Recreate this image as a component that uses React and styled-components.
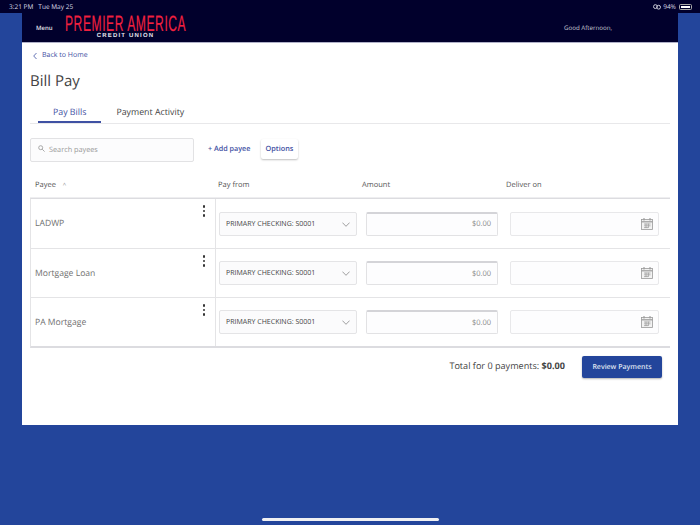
import React from "react";
import styled, { createGlobalStyle } from "styled-components";

const GlobalStyle = createGlobalStyle`
    html, body {
        margin: 0;
        padding: 0;
    }
    body {
        font-family: "Open Sans", "Liberation Sans", sans-serif;
        background: #23459b;
        text-rendering: geometricPrecision;
    }
    * {
        box-sizing: border-box;
    }
`;

const payees = ["LADWP", "Mortgage Loan", "PA Mortgage"];

function CalendarIcon() {
    return (
        <svg width="12" height="12" viewBox="0 0 12 12" fill="none" stroke="#9a9a9a" strokeWidth="0.8">
            <rect x="0.5" y="1.5" width="11" height="10" fill="#f2f2f2" />
            <path d="M0.5 3.8H11.5" strokeWidth="1.2" />
            <path d="M3 0V2.4M9 0V2.4" strokeWidth="1.1" />
            <path d="M3 6H9.5M3 7.8H9.5M3 9.6H7M5 5.6V10M7.4 5.6V10" strokeWidth="0.7" />
        </svg>
    );
}

function Chevron() {
    return (
        <svg width="8" height="5" viewBox="0 0 8 5" fill="none" stroke="#888" strokeWidth="0.8">
            <path d="M0.4 0.6L4 4.3L7.6 0.6" />
        </svg>
    );
}

function PayeeRow({ name }) {
    return (
        <Row>
            <PayeeCell>
                <PayeeName>{name}</PayeeName>
                <Kebab>
                    <i />
                    <i />
                    <i />
                </Kebab>
            </PayeeCell>
            <FieldCell>
                <Select>
                    <span>PRIMARY CHECKING: S0001</span>
                    <Chevron />
                </Select>
                <AmountInput>$0.00</AmountInput>
                <DateInput>
                    <CalendarIcon />
                </DateInput>
            </FieldCell>
        </Row>
    );
}

export default function App() {
    return (
        <Page>
            <GlobalStyle />
            <StatusBar>
                <span>3:21 PM&nbsp;&nbsp; Tue May 25</span>
                <StatusRight>
                    <svg width="8" height="6" viewBox="0 0 8 6" fill="none" stroke="#c9c9d6" strokeWidth="1">
                        <circle cx="2.4" cy="2.6" r="1.9" />
                        <circle cx="5.6" cy="3.2" r="1.9" />
                    </svg>
                    <span>94%</span>
                    <Battery>
                        <div />
                    </Battery>
                </StatusRight>
            </StatusBar>
            <Frame>
                <Header>
                    <MenuLabel>Menu</MenuLabel>
                    <Logo>
                        <LogoTop>PREMIER AMERICA</LogoTop>
                        <LogoBottom>CREDIT UNION</LogoBottom>
                    </Logo>
                    <Greeting>Good Afternoon,</Greeting>
                </Header>
                <Content>
                    <BackLink>
                        <svg width="4" height="8" viewBox="0 0 4 8" fill="none" stroke="#3f51a3" strokeWidth="0.8">
                            <path d="M3.5 1L0.7 4L3.5 7" />
                        </svg>
                        Back to Home
                    </BackLink>
                    <Title>Bill Pay</Title>
                    <Tabs>
                        <Tab $active>Pay Bills</Tab>
                        <Tab>Payment Activity</Tab>
                    </Tabs>
                    <Toolbar>
                        <Search>
                            <svg width="7" height="7" viewBox="0 0 7 7" fill="none" stroke="#a0a0a0" strokeWidth="0.9">
                                <circle cx="2.7" cy="2.7" r="2" />
                                <path d="M4.2 4.2L6.6 6.6" />
                            </svg>
                            <span>Search payees</span>
                        </Search>
                        <AddPayee>+ Add payee</AddPayee>
                        <OptionsButton>Options</OptionsButton>
                    </Toolbar>
                    <TableHead>
                        <HeadPayee>
                            Payee <SortMark>^</SortMark>
                        </HeadPayee>
                        <HeadLabel $width="144px">Pay from</HeadLabel>
                        <HeadLabel $width="144px">Amount</HeadLabel>
                        <HeadLabel>Deliver on</HeadLabel>
                    </TableHead>
                    <Table>
                        {payees.map((name) => (
                            <PayeeRow key={name} name={name} />
                        ))}
                    </Table>
                    <Footer>
                        <Total>
                            Total for 0 payments: <b>$0.00</b>
                        </Total>
                        <ReviewButton>Review Payments</ReviewButton>
                    </Footer>
                </Content>
            </Frame>
            <Bottom>
                <HomeBar />
            </Bottom>
        </Page>
    );
}

const Page = styled.div`
    width: 700px;
    height: 525px;
    display: flex;
    flex-direction: column;
    overflow: hidden;
    background: #23459b;
`;

const StatusBar = styled.div`
    height: 13px;
    flex: none;
    display: flex;
    justify-content: space-between;
    align-items: center;
    padding: 0 8px 0 9px;
    background: #01002c;
    color: #dcdce6;
    font-size: 6.5px;
    line-height: 13px;
`;

const StatusRight = styled.div`
    display: flex;
    align-items: center;
    gap: 2px;
`;

const Battery = styled.div`
    width: 13px;
    height: 6px;
    padding: 1px;
    margin-left: 1px;
    border: 0.5px solid #aaa;
    border-radius: 1.5px;

    div {
        height: 100%;
        background: #fff;
    }
`;

const Frame = styled.div`
    margin: 0 22px;
    flex: none;
    display: flex;
    flex-direction: column;
`;

const Header = styled.div`
    height: 30px;
    display: flex;
    align-items: center;
    background: #01002c;
    border-bottom: 1px solid #b0b1c8;
`;

const MenuLabel = styled.div`
    width: 43px;
    padding-left: 14px;
    color: #e4e4ea;
    font-size: 6px;
    font-weight: 600;
`;

const Logo = styled.div`
    width: 121px;
    display: flex;
    flex-direction: column;
    align-items: center;
`;

const LogoTop = styled.div`
    width: 121px;
    height: 16px;
    color: #f0203f;
    font-family: "Liberation Sans", sans-serif;
    font-size: 22px;
    line-height: 16px;
    letter-spacing: 1px;
    -webkit-text-stroke: 0.15px #f0203f;
    white-space: nowrap;
    transform: scaleX(0.55);
    transform-origin: left center;
`;

const LogoBottom = styled.div`
    margin-top: 1px;
    color: #e6e6ee;
    font-family: "Liberation Sans", sans-serif;
    font-size: 6px;
    font-weight: 700;
    line-height: 6px;
    letter-spacing: 1.2px;
`;

const Greeting = styled.div`
    margin-left: auto;
    width: 114px;
    color: #c8c8d4;
    font-size: 6.2px;
`;

const Content = styled.div`
    height: 382px;
    padding: 0 8px;
    display: flex;
    flex-direction: column;
    background: #fff;
`;

const BackLink = styled.div`
    height: 25px;
    padding-left: 3px;
    display: flex;
    align-items: center;
    gap: 5px;
    color: #3f51a3;
    font-size: 7px;
`;

const Title = styled.div`
    height: 27px;
    color: #444;
    font-size: 15px;
    line-height: 27px;
`;

const Tabs = styled.div`
    height: 29px;
    padding-left: 8px;
    display: flex;
    border-bottom: 1px solid #e8e8ea;
`;

const Tab = styled.div`
    height: 28px;
    padding: 0 15px;
    line-height: 34px;
    font-size: 8.8px;
    color: ${(props) => (props.$active ? "#3f51a3" : "#444")};
    border-bottom: ${(props) => (props.$active ? "2px solid #3f51a3" : "none")};
`;

const Toolbar = styled.div`
    height: 24px;
    margin-top: 14px;
    display: flex;
    align-items: center;
`;

const Search = styled.div`
    width: 164px;
    height: 24px;
    padding: 0 6px 0 7px;
    display: flex;
    gap: 4px;
    align-items: center;
    background: #fcfcfd;
    border: 1px solid #e2e2e4;
    border-radius: 2px;
    color: #999;
    font-size: 7.3px;

    svg {
        margin-top: -4px;
    }
`;

const AddPayee = styled.div`
    margin: -2px 0 0 14px;
    width: 53px;
    color: #3f51a3;
    font-size: 7.2px;
    font-weight: 600;
    white-space: nowrap;
`;

const OptionsButton = styled.div`
    width: 37px;
    height: 20px;
    margin-top: -3px;
    display: flex;
    align-items: center;
    justify-content: center;
    color: #3f51a3;
    font-size: 7.3px;
    font-weight: 600;
    background: #fff;
    border-radius: 2px;
    box-shadow: 0 1px 2px rgba(0, 0, 0, 0.25);
`;

const TableHead = styled.div`
    height: 36px;
    padding-top: 10px;
    display: flex;
    align-items: center;
    color: #555;
    font-size: 7.5px;
`;

const HeadPayee = styled.div`
    width: 188px;
    padding-left: 5px;
`;

const SortMark = styled.span`
    margin-left: 5px;
    color: #888;
    font-size: 6px;
`;

const HeadLabel = styled.div`
    width: ${(props) => props.$width || "auto"};
`;

const Table = styled.div`
    display: flex;
    flex-direction: column;
    border-top: 1px solid #dcdce0;
    border-bottom: 2px solid #dcdce0;
    border-left: 1px solid #e4e4e6;
    box-shadow: 0 -1px 0 #eeeef0;
`;

const Row = styled.div`
    height: 49px;
    display: flex;
    & + & {
        border-top: 1px solid #e4e4e6;
    }
`;

const PayeeCell = styled.div`
    flex: none;
    width: 185px;
    padding-left: 4px;
    position: relative;
    display: flex;
    align-items: center;
    border-right: 1px solid #e4e4e6;
`;

const PayeeName = styled.div`
    margin-top: -1px;
    color: #707070;
    font-size: 8.6px;
`;

const Kebab = styled.div`
    position: absolute;
    top: 6px;
    right: 10px;
    display: flex;
    flex-direction: column;
    gap: 2px;

    i {
        width: 2.5px;
        height: 2.5px;
        border-radius: 50%;
        background: #333;
    }
`;

const FieldCell = styled.div`
    flex: 1;
    padding: 0 11px 0 3px;
    display: flex;
    align-items: center;
`;

const Select = styled.div`
    flex: none;
    width: 138px;
    height: 24px;
    padding: 1px 6px 0 6px;
    display: flex;
    justify-content: space-between;
    align-items: center;
    background: #fbfbfc;
    border: 1px solid #e4e4e6;
    border-radius: 2px;
    color: #444;
    font-size: 7px;
`;

const AmountInput = styled.div`
    flex: none;
    width: 132px;
    height: 24px;
    margin-left: 9px;
    padding-right: 6px;
    display: flex;
    justify-content: flex-end;
    align-items: center;
    background: #fdfdfe;
    border: 1px solid #e2e2e4;
    border-top: 2px solid #d4d4d8;
    border-radius: 2px;
    color: #888;
    font-size: 7.5px;
`;

const DateInput = styled.div`
    flex: none;
    width: 149px;
    height: 24px;
    margin-left: 12px;
    padding-right: 5px;
    display: flex;
    justify-content: flex-end;
    align-items: center;
    background: #fdfdfe;
    border: 1px solid #e8e8ea;
    border-radius: 2px;
`;

const Footer = styled.div`
    margin-top: 8px;
    padding-right: 8px;
    display: flex;
    justify-content: flex-end;
    align-items: center;
`;

const Total = styled.div`
    margin-right: 17px;
    margin-top: -3px;
    color: #444;
    font-size: 9.1px;
`;

const ReviewButton = styled.div`
    width: 80px;
    height: 22px;
    display: flex;
    justify-content: center;
    align-items: center;
    background: #23459b;
    border-radius: 2px;
    box-shadow: 0 1px 2px rgba(0, 0, 0, 0.3);
    color: #dfe3f0;
    font-size: 7px;
    font-weight: 600;
`;

const Bottom = styled.div`
    flex: 1;
    display: flex;
    justify-content: center;
    align-items: flex-end;
    padding-bottom: 4px;
`;

const HomeBar = styled.div`
    width: 177px;
    height: 3px;
    border-radius: 2px;
    background: #f0f0f2;
`;
